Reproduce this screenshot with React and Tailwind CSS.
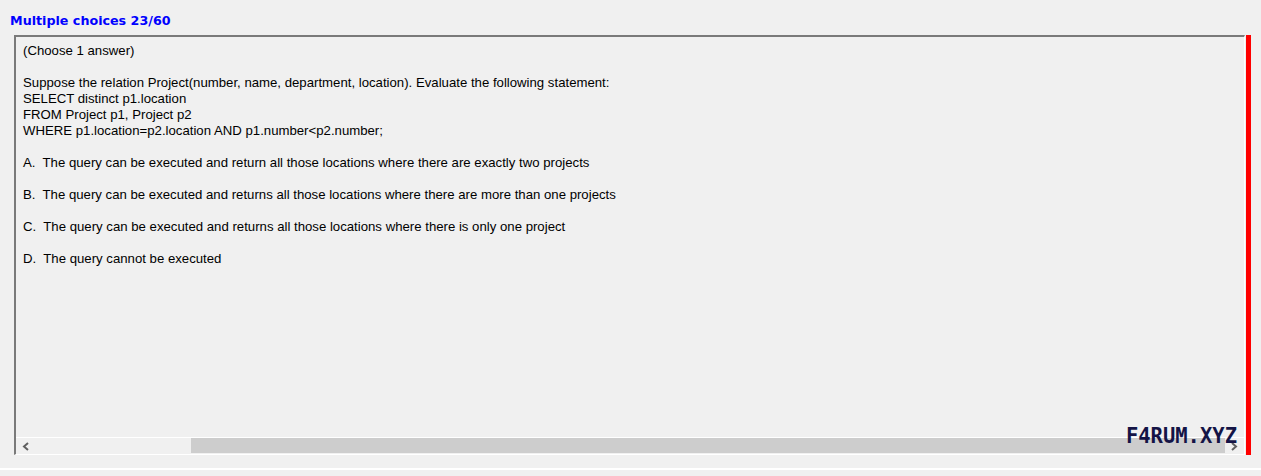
import React from "react";

const lines = [
  "(Choose 1 answer)",
  "",
  "Suppose the relation Project(number, name, department, location). Evaluate the following statement:",
  "SELECT distinct p1.location",
  "FROM Project p1, Project p2",
  "WHERE p1.location=p2.location AND p1.number<p2.number;",
  "",
  "A.  The query can be executed and return all those locations where there are exactly two projects",
  "",
  "B.  The query can be executed and returns all those locations where there are more than one projects",
  "",
  "C.  The query can be executed and returns all those locations where there is only one project",
  "",
  "D.  The query cannot be executed",
];

function ScrollBar() {
  return (
    <div className="flex h-[17px] border-t border-white bg-[#f0f0f0]">
      <div className="flex w-[17px] items-center justify-center ml-[1px]">
        <svg width="8" height="9" viewBox="0 0 8 9">
          <path d="M6 1 L2 4.5 L6 8" fill="none" stroke="#606060" strokeWidth="2" />
        </svg>
      </div>
      <div className="w-[157px]" />
      <div className="w-[1034px] h-[15px] bg-[#cdcdcd]" />
      <div className="flex w-[17px] items-center justify-center">
        <svg width="8" height="9" viewBox="0 0 8 9">
          <path d="M2 1 L6 4.5 L2 8" fill="none" stroke="#606060" strokeWidth="2" />
        </svg>
      </div>
    </div>
  );
}

export default function App() {
  return (
    <div className="relative h-[476px] w-full overflow-hidden bg-[#f0f0f0] font-['Liberation_Sans',Arial,sans-serif]">
      <div className="pl-[10px] pt-[13px] h-[35px] font-['DejaVu_Sans',sans-serif] text-[12.7px] font-bold leading-[16px] text-[#0000ff]">
        Multiple choices 23/60
      </div>
      <div className="flex pl-[14px]">
        <div className="relative flex h-[420px] w-[1231px] flex-col border-l-2 border-t-2 border-[#7a7a7a] border-r border-b border-r-white border-b-white">
          <div className="flex-1 pl-[7px] pt-[6px] text-[13.2px] leading-[16px] text-black">
            {lines.map((l, i) => (
              <div key={i} className="h-[16px] whitespace-pre">
                {l}
              </div>
            ))}
          </div>
          <ScrollBar />
          <div className="absolute right-[7px] bottom-[6px] font-['DejaVu_Sans_Mono',monospace] text-[20.5px] font-bold leading-[24px] text-[#141446]">
            F4RUM.XYZ
          </div>
        </div>
        <div className="ml-[1px] h-[420px] w-[5px] bg-[#ff0000]" />
      </div>
      <div className="mt-[13px] h-[2px] w-full bg-white" />
    </div>
  );
}
